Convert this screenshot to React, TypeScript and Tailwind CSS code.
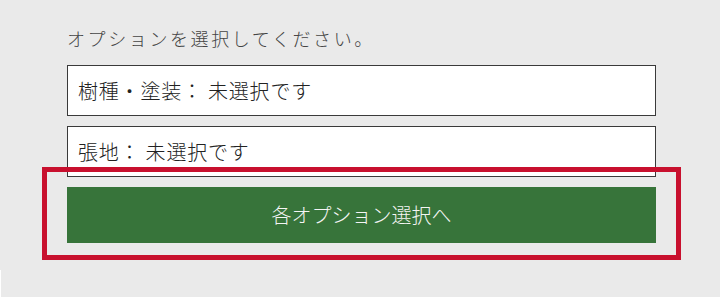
import React from "react";

export default function App() {
  return (
    <div
      className="relative w-[720px] h-[297px] overflow-hidden bg-[#eaeaea]"
      style={{ fontFamily: '"Noto Sans CJK JP", "Noto Sans", sans-serif' }}
    >
      <div className="absolute left-0 top-[270px] w-px h-[27px] bg-white" />
      <div className="flex flex-col pl-[67px] pt-[26px] w-[656px]">
        <p className="h-[24px] leading-[24px] text-[18px] tracking-[2.6px] font-light text-[#444]">
          オプションを選択してください。
        </p>
        <div className="mt-[15px] h-[51px] flex items-center pl-[10px] bg-white border border-[#3a3a3a] text-[20px] tracking-[0.8px] font-light text-[#222]">
          樹種・塗装： 未選択です
        </div>
        <div className="mt-[10px] h-[51px] flex items-center pl-[10px] bg-white border border-[#3a3a3a] text-[20px] tracking-[0.8px] font-light text-[#222]">
          張地： 未選択です
        </div>
        <button className="mt-[10px] h-[56px] flex items-center justify-center bg-[#37743a] text-[20px] font-light text-[#f4f4f4]">
          各オプション選択へ
        </button>
      </div>
      <div className="absolute left-[42px] top-[167px] w-[639px] h-[93px] border-[5px] border-[#c8102e]" />
    </div>
  );
}
